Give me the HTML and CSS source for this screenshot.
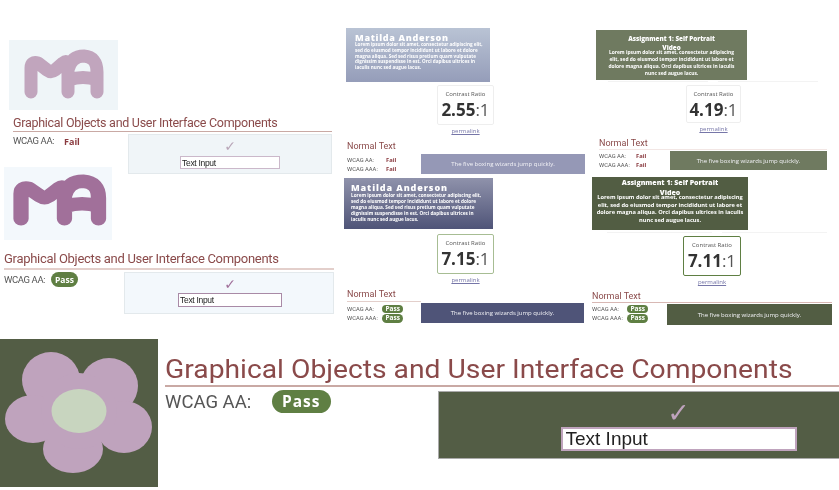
FILE: index.html
```html
<!DOCTYPE html>
<html lang="en">
<head>
  <meta charset="UTF-8" />
  <meta name="viewport" content="width=device-width, initial-scale=1.0"/>
  <title>Contrast examples</title>
  <link rel="stylesheet" href="styles.css">
</head>
<body>

  <svg class="defs" width="0" height="0">
    <defs>
      <path id="ma" d="M22 52V28Q22 21 29 23L38 30Q42 33 46 30L54 23Q59 19 59 27V52M59 30Q62 16 75 16Q88 17 88 32V52M60 40Q74 35 88 40" fill="none" stroke-width="13" stroke-linecap="round" stroke-linejoin="round"/>
    </defs>
  </svg>

  <!-- graphical object, low contrast -->
  <section class="tile graphic-a">
    <svg class="logo" viewBox="0 0 109 70"><use href="#ma" stroke="#c1a5bd"/></svg>
    <h2 class="graphic-title">Graphical Objects and User Interface Components</h2>
    <div class="graphic-row">
      <div class="status"><span class="status-label">WCAG AA:</span><span class="fail">Fail</span></div>
      <div class="demo">
        <span class="check">✓</span>
        <input class="demo-input" type="text" value="Text Input" />
      </div>
    </div>
  </section>

  <!-- graphical object, passing -->
  <section class="tile graphic-b">
    <svg class="logo" viewBox="7.500 2.300 92 70" preserveAspectRatio="none"><use href="#ma" stroke="#a1709a"/></svg>
    <h2 class="graphic-title">Graphical Objects and User Interface Components</h2>
    <div class="graphic-row">
      <div class="status"><span class="status-label">WCAG AA:</span><span class="pass">Pass</span></div>
      <div class="demo">
        <span class="check">✓</span>
        <input class="demo-input" type="text" value="Text Input" />
      </div>
    </div>
  </section>

  <section class="tile text-c">
    <div class="card">
      <h3 class="card-name">Matilda Anderson</h3>
      <p class="card-copy">Lorem ipsum dolor sit amet, consectetur adipiscing elit,<br>sed do eiusmod tempor incididunt ut labore et dolore<br>magna aliqua. Sed sed risus pretium quam vulputate<br>dignissim suspendisse in est. Orci dapibus ultrices in<br>iaculis nunc sed augue lacus.</p>
    </div>
    <div class="ratio">
      <span class="ratio-label">Contrast Ratio</span>
      <span class="ratio-value"><b>2.55</b>:1</span>
    </div>
    <a class="permalink">permalink</a>
    <h4 class="normal-title">Normal Text</h4>
    <div class="normal-row">
      <div class="levels">
        <div class="level"><span class="status-label">WCAG AA:</span><span class="fail">Fail</span></div>
        <div class="level"><span class="status-label">WCAG AAA:</span><span class="fail">Fail</span></div>
      </div>
      <div class="sample">The five boxing wizards jump quickly.</div>
    </div>
  </section>

  <section class="tile text-d">
    <div class="card">
      <h3 class="card-name">Assignment 1: Self Portrait<br>Video</h3>
      <p class="card-copy">Lorem ipsum dolor sit amet, consectetur adipiscing<br>elit, sed do eiusmod tempor incididunt ut labore et<br>dolore magna aliqua.  Orci dapibus ultrices in iaculis<br>nunc sed augue lacus.</p>
    </div>
    <div class="card-under"><span></span><span></span></div>
    <div class="ratio">
      <span class="ratio-label">Contrast Ratio</span>
      <span class="ratio-value"><b>4.19</b>:1</span>
    </div>
    <a class="permalink">permalink</a>
    <h4 class="normal-title">Normal Text</h4>
    <div class="normal-row">
      <div class="levels">
        <div class="level"><span class="status-label">WCAG AA:</span><span class="fail">Fail</span></div>
        <div class="level"><span class="status-label">WCAG AAA:</span><span class="fail">Fail</span></div>
      </div>
      <div class="sample">The five boxing wizards jump quickly.</div>
    </div>
  </section>

  <section class="tile text-e">
    <div class="card">
      <h3 class="card-name">Matilda Anderson</h3>
      <p class="card-copy">Lorem ipsum dolor sit amet, consectetur adipiscing elit,<br>sed do eiusmod tempor incididunt ut labore et dolore<br>magna aliqua. Sed sed risus pretium quam vulputate<br>dignissim suspendisse in est. Orci dapibus ultrices in<br>iaculis nunc sed augue lacus.</p>
    </div>
    <div class="ratio">
      <span class="ratio-label">Contrast Ratio</span>
      <span class="ratio-value"><b>7.15</b>:1</span>
    </div>
    <a class="permalink">permalink</a>
    <h4 class="normal-title">Normal Text</h4>
    <div class="normal-row">
      <div class="levels">
        <div class="level"><span class="status-label">WCAG AA:</span><span class="pass">Pass</span></div>
        <div class="level"><span class="status-label">WCAG AAA:</span><span class="pass">Pass</span></div>
      </div>
      <div class="sample">The five boxing wizards jump quickly.</div>
    </div>
  </section>

  <section class="tile text-f">
    <div class="card">
      <h3 class="card-name">Assignment 1: Self Portrait<br>Video</h3>
      <p class="card-copy">Lorem ipsum dolor sit amet, consectetur adipiscing<br>elit, sed do eiusmod tempor incididunt ut labore et<br>dolore magna aliqua.  Orci dapibus ultrices in iaculis<br>nunc sed augue lacus.</p>
    </div>
    <div class="card-under"><span></span><span></span></div>
    <div class="ratio">
      <span class="ratio-label">Contrast Ratio</span>
      <span class="ratio-value"><b>7.11</b>:1</span>
    </div>
    <a class="permalink">permalink</a>
    <h4 class="normal-title">Normal Text</h4>
    <div class="normal-row">
      <div class="levels">
        <div class="level"><span class="status-label">WCAG AA:</span><span class="pass">Pass</span></div>
        <div class="level"><span class="status-label">WCAG AAA:</span><span class="pass">Pass</span></div>
      </div>
      <div class="sample">The five boxing wizards jump quickly.</div>
    </div>
  </section>

  <!-- big one along the bottom -->
  <section class="tile graphic-large">
    <svg class="flower" viewBox="0 0 158 148">
      <g fill="#bfa3bd">
        <ellipse cx="51" cy="41" rx="29" ry="28"/>
        <ellipse cx="109" cy="47" rx="29" ry="28"/>
        <ellipse cx="124" cy="88" rx="28" ry="26"/>
        <ellipse cx="73" cy="110" rx="30" ry="24"/>
        <ellipse cx="33" cy="80" rx="28" ry="24"/>
        <circle cx="79" cy="72" r="38"/>
      </g>
      <ellipse cx="79" cy="72" rx="27.500" ry="22" fill="#c8d5bf"/>
    </svg>
    <div class="large-main">
      <h2 class="large-title"><span class="large-title-text">Graphical Objects and User Interface Components</span></h2>
      <div class="large-row">
        <div class="status"><span class="status-label">WCAG AA:</span><span class="pass">Pass</span></div>
        <div class="demo">
          <span class="check">✓</span>
          <input class="demo-input" type="text" value="Text Input" />
        </div>
      </div>
    </div>
  </section>

</body>
</html>
```

FILE: styles.css
```css
body {
  margin: 0;
  background: #fff;
  font-family: 'Roboto', sans-serif;
  overflow: hidden;
}

.defs {
  display: block;
}

/* the page is a collage, each tile sits where it was pasted */
.tile {
  position: absolute;
}

.graphic-a { left: 9px; top: 40px; width: 323px; filter: blur(0.5px); }
.graphic-b { left: 4px; top: 167px; width: 330px; filter: blur(0.5px); }
.text-c { left: 346px; top: 28px; width: 239px; filter: blur(0.6px); }
.text-d { left: 596px; top: 30px; width: 231px; filter: blur(0.6px); }
.text-e { left: 344px; top: 178px; width: 240px; filter: blur(0.5px); }
.text-f { left: 592px; top: 177px; width: 240px; filter: blur(0.5px); }
.graphic-large { left: 0; top: 339px; width: 839px; display: flex; filter: blur(0.2px); }

/* graphical objects */
.logo {
  display: block;
  width: 109px;
  height: 70px;
  background: #eff5f8;
}

.graphic-b .logo {
  height: 73px;
  width: 108px;
  background: #f3f8fc;
}

.graphic-title {
  margin: 5px 0 0 4px;
  padding-bottom: 1px;
  border-bottom: 1px solid #c9a9a4;
  color: #8a4a4a;
  font-size: 12.500px;
  font-weight: 400;
  line-height: 15px;
  letter-spacing: -0.28px;
  white-space: nowrap;
}

.graphic-b .graphic-title {
  margin: 11px 0 0;
  padding-bottom: 1px;
  border-bottom: 2px solid #e3cfcb;
  font-size: 13px;
  line-height: 16px;
  letter-spacing: -0.3px;
}

.graphic-row {
  display: flex;
  justify-content: space-between;
  margin-top: 2px;
}

.status {
  display: flex;
  align-items: flex-start;
  padding: 0 0 0 4px;
  font-size: 9.500px;
  letter-spacing: -0.4px;
  color: #555;
}

.graphic-b .status {
  padding: 0;
}

.status .status-label {
  width: 51px;
  padding-top: 1px;
}

.graphic-b .status .status-label {
  width: 47px;
  padding-top: 2px;
}

.fail {
  padding-top: 1px;
  color: #8a3a3f;
  font-weight: 700;
  font-family: 'Open Sans', sans-serif;
  font-size: 9px;
  letter-spacing: 0;
}

.pass {
  padding: 1px 4px;
  border-radius: 10px;
  background: #5f7f43;
  color: #fff;
  font-family: 'Open Sans', sans-serif;
  font-weight: 700;
  font-size: 8.500px;
  line-height: 13px;
  letter-spacing: 0;
}

.demo {
  display: flex;
  flex-direction: column;
  align-items: center;
  box-sizing: border-box;
  width: 204px;
  height: 40px;
  background: #f0f5f8;
  border: 1px solid #e3e9ec;
}

.graphic-b .demo {
  width: 210px;
  height: 42px;
  padding-left: 2px;
  background: #f3f8fc;
}

.check {
  height: 21px;
  font-family: 'DejaVu Sans', sans-serif;
  font-size: 14px;
  line-height: 23px;
  color: #b9a6b8;
}

.graphic-b .check {
  height: 20px;
  color: #a1709a;
}

.demo-input {
  box-sizing: border-box;
  width: 100px;
  height: 13px;
  margin: 0;
  padding: 0 1px;
  border: 1px solid #cbb8ca;
  border-radius: 0;
  background: #fff;
  color: #222;
  font-family: 'Liberation Sans', sans-serif;
  font-size: 8.500px;
  letter-spacing: -0.3px;
}

.graphic-b .demo-input {
  width: 104px;
  height: 14px;
  border: 1px solid #a98aa6;
}

/* contrast tiles */
.card {
  box-sizing: border-box;
  width: 144px;
  height: 54px;
  padding: 5px 9px 0;
  background: linear-gradient(#b9c3d4, #959db9);
  color: #fff;
  font-family: 'Open Sans', sans-serif;
}

.text-d .card {
  width: 151px;
  height: 50px;
  padding: 3.500px 6px 0;
  background: #6f7a60;
  text-align: center;
}

.text-e .card {
  width: 149px;
  height: 51px;
  padding: 4.500px 7px 0;
  background: linear-gradient(#8f92ab, #4f5478);
}

.text-f .card {
  width: 156px;
  height: 53px;
  padding: 1px 4px 0;
  background: #525d43;
  text-align: center;
}

.card-under {
  display: flex;
  gap: 10px;
  height: 2px;
  padding-left: 12px;
}

.card-under span {
  width: 100px;
  border-bottom: 1px solid #f3f3f3;
}

.text-f .card-under { padding-left: 15px; height: 3px; }
.text-f .card-under span { width: 105px; }

.card-name {
  margin: 0;
  font-size: 9px;
  line-height: 9px;
  font-weight: 800;
  letter-spacing: 0.7px;
  white-space: nowrap;
}

.text-e .card-name {
  letter-spacing: 0.9px;
}

.text-d .card-name {
  font-size: 6.300px;
  letter-spacing: 0;
}

.text-f .card-name {
  font-size: 7px;
  line-height: 10px;
  letter-spacing: 0;
}

.card-copy {
  margin: 0;
  font-size: 4.600px;
  line-height: 5.800px;
  font-weight: 700;
  white-space: nowrap;
}

.text-d .card-copy {
  margin-top: -3px;
  font-size: 4.900px;
  line-height: 7px;
}

.text-e .card-copy {
  font-size: 4.700px;
  line-height: 6.200px;
}

.text-f .card-copy {
  margin-top: -4px;
  font-size: 5.700px;
  line-height: 7.500px;
}

.ratio {
  display: flex;
  flex-direction: column;
  align-items: center;
  box-sizing: border-box;
  width: 57px;
  height: 40px;
  margin: 3px 0 0 91px;
  padding-top: 5px;
  border: 1px solid #eee;
  border-radius: 2px;
  font-family: 'Open Sans', sans-serif;
  color: #555;
}

.text-d .ratio { width: 55px; height: 38px; margin: 3px 0 0 90px; }
.text-e .ratio { margin: 5px 0 0 93px; border: 1px solid #a7bd93; }
.text-f .ratio { width: 58px; height: 40px; margin: 3px 0 0 91px; border: 1px solid #5f7f43; }

.ratio-label {
  font-size: 6px;
  line-height: 7px;
}

.ratio-value {
  font-size: 17px;
  line-height: 24px;
  white-space: nowrap;
}

.ratio-value b {
  color: #333;
}

.permalink {
  display: block;
  width: 57px;
  margin: 2px 0 0 91px;
  color: #7676a8;
  font-family: 'Open Sans', sans-serif;
  font-size: 6px;
  line-height: 8px;
  text-align: center;
  text-decoration: underline;
}

.text-d .permalink { width: 55px; margin-left: 90px; }
.text-e .permalink { margin-left: 93px; }
.text-f .permalink { width: 58px; margin-left: 91px; }

.normal-title {
  margin: 6px 0 0 1px;
  color: #8a4a4a;
  font-size: 9px;
  line-height: 11px;
  font-weight: 400;
}

.text-d .normal-title { margin: 5px 0 0 3px; border-bottom: 1px solid #f2e6e4; }
.text-e .normal-title { margin: 5px 0 0 3px; border-bottom: 1px solid #e3cfcb; padding-bottom: 1px; width: 74px; }
.text-f .normal-title { margin: 5px 0 0; border-bottom: 1px solid #d8b8b4; }

.normal-row {
  display: flex;
  justify-content: space-between;
  margin-top: 2px;
}

.text-d .normal-row { margin-top: 1px; }
.text-e .normal-row { margin-top: 1px; }
.text-f .normal-row { margin-top: 1px; }

.levels {
  display: flex;
  flex-direction: column;
  padding: 1px 0 0 1px;
}

.text-d .levels { padding: 0 0 0 3px; }
.text-e .levels { padding-left: 3px; }
.text-f .levels { padding: 0; }

.level {
  display: flex;
  align-items: center;
  height: 9.500px;
  font-size: 5.800px;
  color: #555;
}

.level .status-label {
  width: 39px;
}

.text-d .level .status-label { width: 37px; }
.text-e .level .status-label { width: 35px; }
.text-f .level .status-label { width: 35px; }

.level .fail {
  padding: 0;
  font-size: 5.800px;
}

.level .pass {
  padding: 0 3.500px;
  font-size: 6.500px;
  line-height: 8.500px;
}

.sample {
  display: flex;
  align-items: center;
  justify-content: center;
  width: 164px;
  height: 20px;
  background: #9598b6;
  color: #f2f2f6;
  font-family: 'Open Sans', sans-serif;
  font-size: 6px;
}

.text-d .sample { width: 157px; height: 19px; background: #6f7a60; }
.text-e .sample { width: 163px; height: 20px; background: #4f5478; }
.text-f .sample { width: 165px; height: 21px; background: #525d43; }

/* bottom one */
.flower {
  display: block;
  flex: none;
  width: 158px;
  height: 148px;
  background: #535d45;
}

.large-main {
  flex: 1;
  min-width: 0;
  padding: 17px 0 0 7px;
}

.large-title {
  margin: 0;
  padding-bottom: 1px;
  border-bottom: 2px solid #c9a9a4;
  color: #8a4a4a;
  font-size: 25px;
  font-weight: 400;
  line-height: 28px;
  white-space: nowrap;
}

/* the reference is stretched sideways at this size */
.large-title-text {
  display: inline-block;
  transform: scaleX(1.13);
  transform-origin: left;
}

.large-row {
  display: flex;
  margin-top: 4px;
}

.large-row .status {
  flex: none;
  box-sizing: border-box;
  width: 273px;
  padding: 0;
  font-size: 18.500px;
  letter-spacing: 0;
}

.large-row .status .status-label {
  width: 107px;
  padding-top: 0;
}

.large-row .pass {
  margin-top: -1px;
  padding: 2px 10px;
  border-radius: 12px;
  font-size: 15.500px;
  line-height: 19px;
  letter-spacing: 1px;
}

/* the box is cut off by the window, so its content sits right of centre */
.large-row .demo {
  flex: none;
  width: 401px;
  height: 68px;
  padding-left: 79px;
  border: 1px solid #aaa;
  border-right: 0;
  background: #535d45;
}

.large-row .check {
  height: 35px;
  font-size: 27px;
  line-height: 42px;
  color: #bfa3bd;
}

.large-row .demo-input {
  width: 236px;
  height: 24px;
  padding: 0 3px;
  border: 2px solid #bfa3bd;
  font-size: 19px;
  letter-spacing: 0;
}
```
